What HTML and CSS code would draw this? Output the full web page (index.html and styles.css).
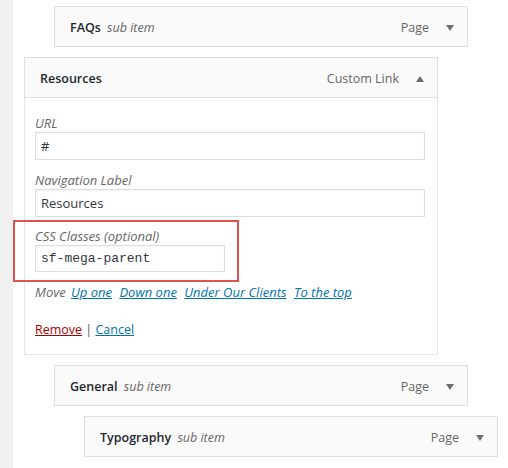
FILE: index.html
```html
<!DOCTYPE html>
<html lang="en">
<head>
    <meta charset="UTF-8">
    <meta name="viewport" content="width=device-width, initial-scale=1.0">
    <title>Menus</title>
    <link rel="stylesheet" href="styles.css">
</head>
<body>
    <div class="page">
        <div class="admin-edge"></div>
        <ul class="menu-list">
            <li class="menu-item depth-1">
                <div class="item-handle">
                    <span class="item-title"><b>FAQs</b> <em>sub item</em></span>
                    <span class="item-type">Page</span>
                    <span class="arrow down"></span>
                </div>
            </li>

            <li class="menu-item depth-0 open">
                <div class="item-handle">
                    <span class="item-title"><b>Resources</b></span>
                    <span class="item-type">Custom Link</span>
                    <span class="arrow up"></span>
                </div>
                <div class="item-settings">
                    <div class="field">
                        <label for="url">URL</label>
                        <input type="text" id="url" value="#">
                    </div>
                    <div class="field">
                        <label for="navlabel">Navigation Label</label>
                        <input type="text" id="navlabel" value="Resources">
                    </div>
                    <div class="field highlighted">
                        <label for="cssclasses">CSS Classes (optional)</label>
                        <input type="text" id="cssclasses" class="code" value="sf-mega-parent">
                    </div>
                    <div class="field-move">
                        Move <a href="#">Up one</a> <a href="#">Down one</a> <a href="#">Under Our Clients</a> <a href="#">To the top</a>
                    </div>
                    <div class="actions">
                        <a href="#" class="remove">Remove</a> <span class="sep">|</span> <a href="#" class="cancel">Cancel</a>
                    </div>
                </div>
            </li>

            <li class="menu-item depth-1">
                <div class="item-handle">
                    <span class="item-title"><b>General</b> <em>sub item</em></span>
                    <span class="item-type">Page</span>
                    <span class="arrow down"></span>
                </div>
            </li>

            <li class="menu-item depth-2">
                <div class="item-handle">
                    <span class="item-title"><b>Typography</b> <em>sub item</em></span>
                    <span class="item-type">Page</span>
                    <span class="arrow down"></span>
                </div>
            </li>
        </ul>
    </div>
</body>
</html>
```

FILE: styles.css
```css
body {
    margin: 0;
    background-color: #fff;
    color: #23282d;
    font-family: "Open Sans", Arial, sans-serif;
    font-size: 13px;
}

.page {
    display: flex;
    min-height: 468px;
}

.admin-edge {
    width: 13px;
    flex-shrink: 0;
    background-color: #f1f1f1;
}

.menu-list {
    list-style: none;
    margin: 0;
    padding: 6px 0 0 11px;
}

.menu-item {
    width: 414px;
    margin-bottom: 10px;
}

.depth-1 {
    margin-left: 30px;
}

.depth-2 {
    margin-left: 60px;
}

/* collapsed bar */
.item-handle {
    display: flex;
    align-items: center;
    height: 37px;
    padding: 2px 13px 0 15px;
    border: 1px solid #dfdfdf;
    background-color: #fafafa;
    font-size: 12.5px;
    line-height: 20px;
}

.item-title {
    flex: 1;
}

.item-title b {
    font-weight: 600;
    margin-right: 3px;
}

.item-title em {
    color: #666;
}

.item-type {
    color: #666;
    margin-right: 17px;
}

.arrow {
    width: 0;
    height: 0;
    border-left: 4px solid transparent;
    border-right: 4px solid transparent;
}

.arrow.down {
    border-top: 6px solid #6b6f75;
}

.arrow.up {
    border-bottom: 6px solid #6b6f75;
}

/* expanded item */
.open .item-settings {
    border: 1px solid #e5e5e5;
    border-top: none;
    padding: 16px 12px 15px 10px;
}

.field {
    margin-bottom: 11px;
}

.field label {
    display: block;
    font-style: italic;
    color: #666;
    line-height: 18px;
}

.field input {
    display: block;
    width: 100%;
    box-sizing: border-box;
    height: 28px;
    padding: 0 5px;
    border: 1px solid #ddd;
    box-shadow: inset 0 1px 2px rgba(0, 0, 0, 0.04);
    font-family: "Open Sans", Arial, sans-serif;
    font-size: 13px;
    color: #32373c;
    background-color: #fff;
}

.field.highlighted {
    margin: -8px 0 1px -22px;
    padding: 5px 12px 8px 20px;
    width: 190px;
    border: 2px solid #e0524f;
}

.field input.code {
    height: 27px;
    font-family: "Liberation Mono", "DejaVu Sans Mono", monospace;
    font-size: 13px;
}

.field-move {
    font-style: italic;
    color: #666;
    line-height: 18px;
}

.field-move a {
    color: #0073aa;
    margin: 0 2px;
}

.actions {
    margin-top: 20px;
    font-size: 12.5px;
    line-height: 18px;
    color: #555;
}

.actions a {
    color: #0073aa;
}

.actions a.remove {
    color: #a00;
}
```
